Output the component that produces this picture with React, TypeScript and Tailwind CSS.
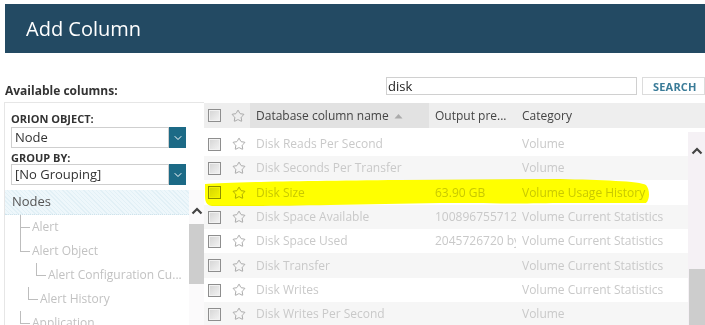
import React from "react";
import { Star, ChevronDown } from "lucide-react";

const rows = [
  { name: "Disk Reads Per Second", out: "", cat: "Volume", h: "h-[24px]", bg: "bg-white" },
  { name: "Disk Seconds Per Transfer", out: "", cat: "Volume", h: "h-[24px]", bg: "bg-[#f6f6f6]" },
  { name: "Disk Size", out: "63.90 GB", cat: "Volume Usage History", h: "h-[25px]", bg: "bg-white" },
  { name: "Disk Space Available", out: "100896755712 bytes", cat: "Volume Current Statistics", h: "h-[24px]", bg: "bg-[#f6f6f6]" },
  { name: "Disk Space Used", out: "2045726720 bytes", cat: "Volume Current Statistics", h: "h-[24px]", bg: "bg-white" },
  { name: "Disk Transfer", out: "", cat: "Volume Current Statistics", h: "h-[25px]", bg: "bg-[#f6f6f6]" },
  { name: "Disk Writes", out: "", cat: "Volume Current Statistics", h: "h-[24px]", bg: "bg-white" },
  { name: "Disk Writes Per Second", out: "", cat: "Volume", h: "h-[24px]", bg: "bg-[#f6f6f6]" },
];

function Checkbox() {
  return (
    <div className="w-[13px] h-[13px] border border-[#8e8e8e] bg-gradient-to-br from-[#d4d4d4] to-[#f4f4f4] shadow-[inset_0_0_0_1px_#f2f2f2]" />
  );
}

function UpChevron() {
  return (
    <svg width="12" height="8" viewBox="0 0 12 8">
      <path d="M1.5 6.5 L6 2 L10.5 6.5" fill="none" stroke="#444" strokeWidth="2.2" />
    </svg>
  );
}

function Connector({ type }: { type: "tee" | "end" }) {
  return (
    <svg width="11" height="24" viewBox="0 0 11 24" className="shrink-0">
      <line x1="0.5" y1="0" x2="0.5" y2={type === "tee" ? 24 : 12.5} stroke="#bdbdbd" strokeWidth="1" />
      <line x1="0" y1="12.5" x2="10" y2="12.5" stroke="#bdbdbd" strokeWidth="1" />
    </svg>
  );
}

function Select({ value }: { value: string }) {
  return (
    <div className="flex h-[21px] w-[175px] ml-[6px]">
      <div className="flex-1 border border-[#cfcfcf] bg-white flex items-center pl-[3px] text-[13px] text-[#333] leading-none">
        {value}
      </div>
      <div className="w-[17px] bg-[#1c6a86] flex items-center justify-center">
        <ChevronDown size={12} color="#ffffff" strokeWidth={2} />
      </div>
    </div>
  );
}

const tree = [
  { label: "Alert", indent: 15, type: "tee" as const },
  { label: "Alert Object", indent: 15, type: "end" as const },
  { label: "Alert Configuration Cu...", indent: 31, type: "end" as const },
  { label: "Alert History", indent: 23, type: "end" as const },
  { label: "Application", indent: 15, type: "end" as const },
];

export default function App() {
  return (
    <div className="relative w-[705px] h-[325px] overflow-hidden bg-white font-['Open_Sans',sans-serif]">
      <div className="ml-[5px] mt-[4px] h-[49px] bg-[#234a63] flex items-center pl-[21px]">
        <span className="text-white text-[20px] leading-none">Add Column</span>
      </div>

      <div className="flex items-center mt-[24px] h-[18px]">
        <div className="w-[386px] pl-[5px] pt-[10px] text-[12px] font-bold text-[#333] leading-none">
          Available columns:
        </div>
        <div className="w-[251px] h-[18px] border border-[#d0d0d0] flex items-center pl-[1px] text-[13px] text-[#222] leading-none">
          disk
        </div>
        <div className="ml-[5px] w-[63px] h-[18px] border border-[#dcdcdc] flex items-center pl-[10px] text-[11px] font-bold text-[#3a7b98] leading-none tracking-[0.2px]">
          SEARCH
        </div>
      </div>

      <div className="flex mt-[7px] h-[223px]">
        {/* left panel */}
        <div className="ml-[4px] w-[200px] border-l border-t border-[#e6e6e6] flex flex-col">
          <div className="pl-[6px] pt-[9px] text-[11px] font-bold text-[#333] leading-[13px]">ORION OBJECT:</div>
          <div className="mt-[2px]">
            <Select value="Node" />
          </div>
          <div className="pl-[6px] pt-[3px] text-[11px] font-bold text-[#333] leading-[13px]">GROUP BY:</div>
          <div>
            <Select value="[No Grouping]" />
          </div>
          <div className="flex flex-1 mt-[5px] min-h-0">
            <div className="w-[184px] flex flex-col overflow-hidden">
              <div className="h-[25px] shrink-0 flex items-center pl-[7px] text-[13px] text-[#555] bg-[repeating-linear-gradient(45deg,#e2f0f6_0px,#e2f0f6_1px,#eef7fb_1px,#eef7fb_3px)] border-b border-dotted border-[#cfe3ec]">
                Nodes
              </div>
              {tree.map((t, i) => (
                <div key={i} className="h-[24px] shrink-0 flex items-center" style={{ paddingLeft: t.indent }}>
                  <Connector type={t.type} />
                  <span className="ml-[1px] text-[12px] text-[#c2c2c2] whitespace-nowrap leading-none">{t.label}</span>
                </div>
              ))}
            </div>
            <div className="w-[15px] flex flex-col bg-[#fbfafb]">
              <div className="h-[34px] flex items-end justify-center pb-[9px]">
                <UpChevron />
              </div>
              <div className="h-[60px] bg-[#cdcdcd]" />
            </div>
          </div>
        </div>

        {/* right panel */}
        <div className="flex-1 flex flex-col">
          <div className="h-[25px] mt-[1px] bg-[#eeeeee] flex items-center text-[12px] text-[#444]">
            <div className="w-[22px] pl-[4px] flex items-center"><Checkbox /></div>
            <div className="w-[24px] pl-[5px] flex items-center"><Star size={14} strokeWidth={1.4} color="#999" /></div>
            <div className="w-[179px] h-full bg-[#e2e2e2] flex items-center pl-[6px]">
              Database column name
              <svg width="9" height="6" viewBox="0 0 9 6" className="ml-[5px]">
                <path d="M0.5 5.5 L4.5 1 L8.5 5.5 Z" fill="#aaa" />
              </svg>
            </div>
            <div className="w-[87px] pl-[6px] whitespace-nowrap">Output pre...</div>
            <div className="pl-[6px]">Category</div>
          </div>
          <div className="flex mt-[4px] flex-1 min-h-0">
            <div className="w-[484px] flex flex-col overflow-hidden">
              {rows.map((r, i) => (
                <div key={i} className={`${r.h} ${r.bg} shrink-0 flex items-center text-[12px] text-[#c9c9c9]`}>
                  <div className="w-[22px] pl-[4px] flex items-center"><Checkbox /></div>
                  <div className="w-[24px] pl-[6px] flex items-center"><Star size={14} strokeWidth={1.4} color="#999" /></div>
                  <div className="w-[179px] pl-[6px] whitespace-nowrap overflow-hidden">{r.name}</div>
                  <div className="w-[87px] pl-[6px] whitespace-nowrap overflow-hidden">{r.out}</div>
                  <div className="flex-1 pl-[6px] whitespace-nowrap overflow-hidden">{r.cat}</div>
                </div>
              ))}
            </div>
            <div className="flex-1 flex flex-col bg-[#f5f1f5]">
              <div className="h-[24px] flex items-end justify-center pb-[1px]">
                <UpChevron />
              </div>
              <div className="flex-1" />
              <div className="h-[56px] ml-[1px] bg-[#cdcdcd]" />
            </div>
          </div>
        </div>
      </div>

      <svg className="absolute left-0 top-0 pointer-events-none mix-blend-multiply" width="705" height="325" viewBox="0 0 705 325">
        <path
          d="M205,184 C230,182 300,181 400,180 L560,179 C600,180 640,181 646,185 C650,190 650,199 646,203 L560,203 C500,204 480,203 440,203 L330,205 C280,206 240,206 212,206 C206,205 205,201 205,196 Z"
          fill="#ffff00"
        />
      </svg>
    </div>
  );
}
